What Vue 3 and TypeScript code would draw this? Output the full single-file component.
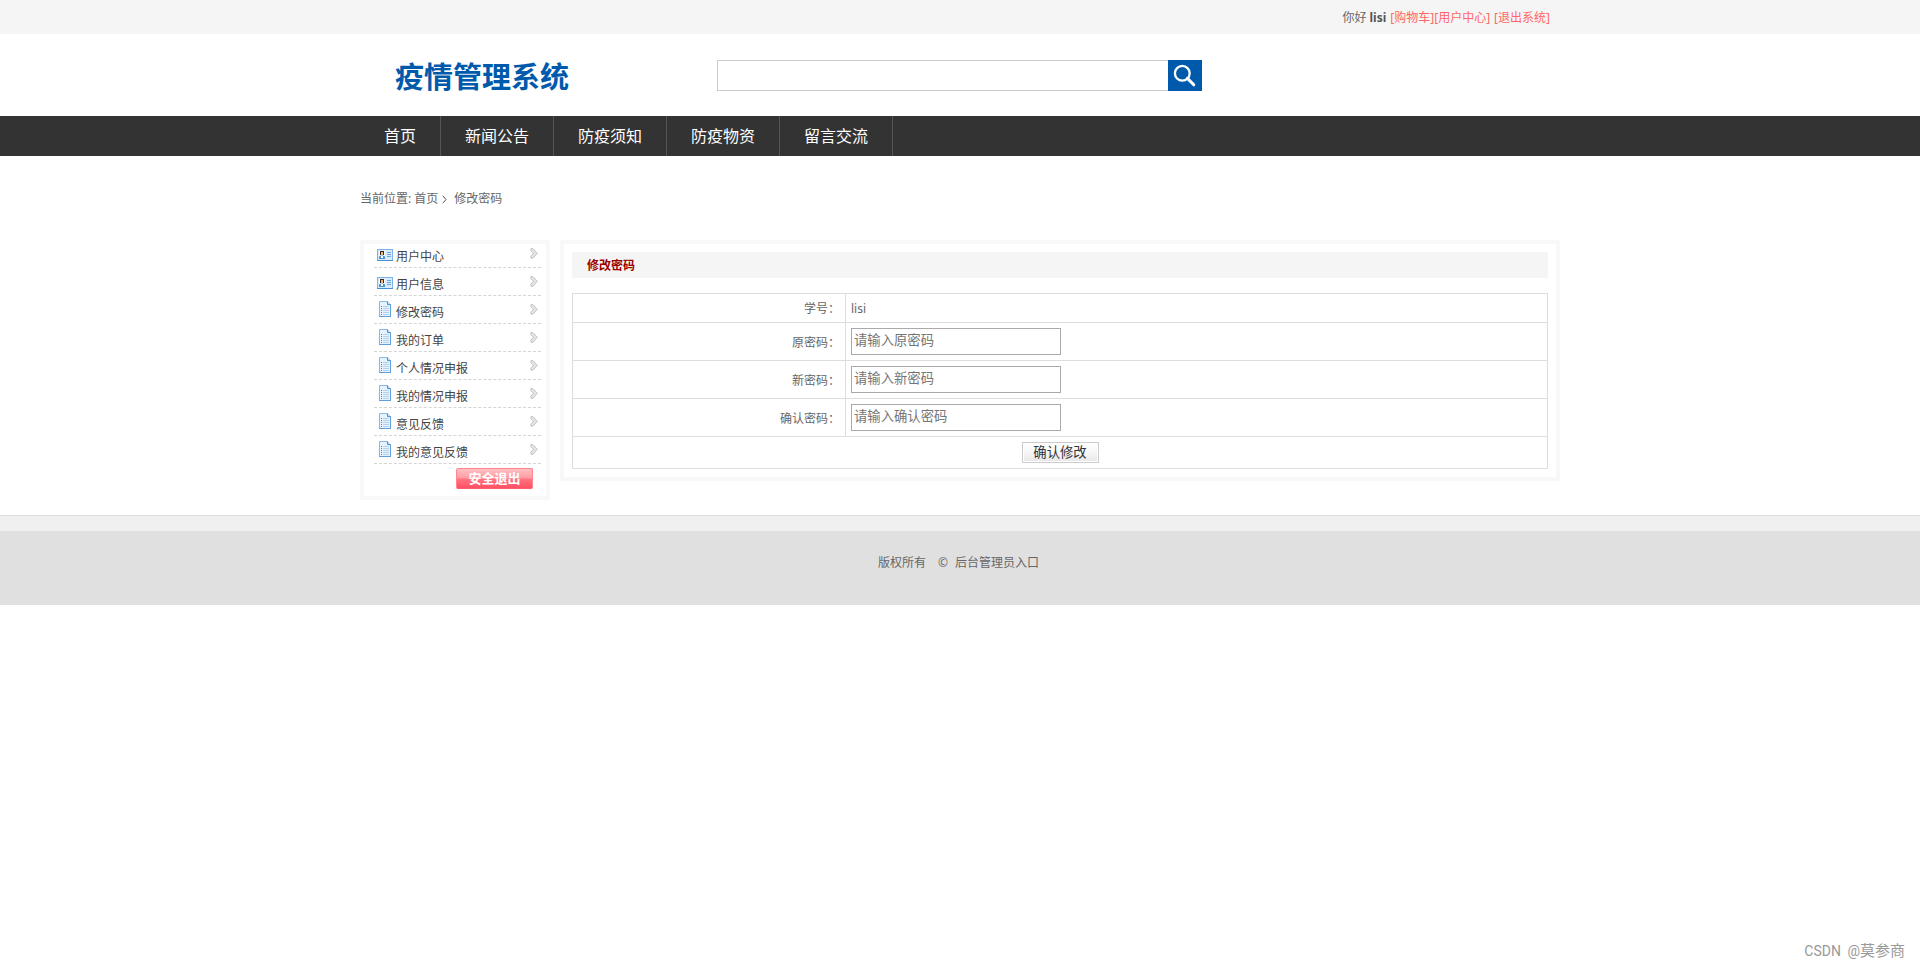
<script setup lang="ts">
import { ref } from 'vue'

interface MenuItem {
  label: string
  icon: 'card' | 'doc'
}

interface Field {
  label: string
  placeholder: string
}

const navItems: string[] = ['首页', '新闻公告', '防疫须知', '防疫物资', '留言交流']

const menu: MenuItem[] = [
  { label: '用户中心', icon: 'card' },
  { label: '用户信息', icon: 'card' },
  { label: '修改密码', icon: 'doc' },
  { label: '我的订单', icon: 'doc' },
  { label: '个人情况申报', icon: 'doc' },
  { label: '我的情况申报', icon: 'doc' },
  { label: '意见反馈', icon: 'doc' },
  { label: '我的意见反馈', icon: 'doc' },
]

const fields: Field[] = [
  { label: '原密码：', placeholder: '请输入原密码' },
  { label: '新密码：', placeholder: '请输入新密码' },
  { label: '确认密码：', placeholder: '请输入确认密码' },
]

const keyword = ref('')
const values = ref<string[]>(['', '', ''])
</script>

<template>
  <div class="page">
    <div class="topbar">
      <div class="wrap topbar-in">
        <span class="hello">你好</span>
        <b class="user">lisi</b>
        <a class="cart">[购物车]</a>
        <a class="center">[用户中心]</a>
        <a>[退出系统]</a>
      </div>
    </div>

    <header class="wrap header">
      <h1 class="logo">疫情管理系统</h1>
      <form class="search" @submit.prevent>
        <input v-model="keyword" type="text" class="search-input" />
        <button class="search-btn" type="submit" aria-label="搜索">
          <svg width="34" height="31" viewBox="0 0 34 31" fill="none" stroke="#fff">
            <ellipse cx="14.3" cy="13.3" rx="7.4" ry="7.4" stroke-width="2.3" />
            <path d="M19.4 18.4L25.8 24.8" stroke-width="3" stroke-linecap="round" />
          </svg>
        </button>
      </form>
    </header>

    <nav class="nav">
      <div class="wrap nav-in">
        <a v-for="item in navItems" :key="item" class="nav-item">{{ item }}</a>
      </div>
    </nav>

    <div class="wrap crumbs">
      <span>当前位置:</span>
      <a class="crumb-home">首页</a>
      <svg class="crumb-sep" width="5" height="9" viewBox="0 0 5 9" fill="none" stroke="#555">
        <path d="M0.8 0.8L4 4.5L0.8 8.2" />
      </svg>
      <span>修改密码</span>
    </div>

    <main class="wrap main">
      <aside class="side">
        <ul class="menu">
          <li v-for="item in menu" :key="item.label" class="menu-item">
            <svg v-if="item.icon === 'card'" class="icon card-icon" width="16" height="12" viewBox="0 0 16 12">
              <rect x="0.5" y="0.5" width="15" height="11" fill="#d9ebfc" stroke="#7db3e8" />
              <rect x="2" y="2" width="6" height="8" fill="#f4f9ff" />
              <rect x="3" y="2" width="4" height="4" fill="#3b2a20" />
              <rect x="4" y="3" width="2" height="3" fill="#f2b66f" />
              <path d="M2 10V7.5L4 6.5H6L8 7.5V10Z" fill="#4a94d6" />
              <rect x="4" y="7" width="2" height="2" fill="#fff" />
              <path d="M10 3.5H14M10 5.5H14M10 7.5H14" stroke="#6fa6dc" />
              <path d="M0 11.5H16" stroke="#4a8fd0" />
            </svg>
            <svg v-else class="icon doc-icon" width="12" height="16" viewBox="0 0 12 16">
              <path d="M0.5 0.5H8.5L11.5 3.5V15.5H0.5Z" fill="#e6f2fe" stroke="#86b8e8" />
              <path d="M8.5 0.5V3.5H11.5" fill="#cfe5fa" stroke="#4d8fce" />
              <path d="M0 15.5H12M11.5 4V16" stroke="#5f9fdb" />
              <path d="M4 5.5H10M4 7.5H10M4 9.5H10M4 11.5H10M4 13.5H10" stroke="#b3d0ec" />
              <path d="M2 5.5H3M2 7.5H3M2 9.5H3M2 11.5H3M2 13.5H3" stroke="#3ba55b" />
            </svg>
            <span class="menu-label">{{ item.label }}</span>
            <svg class="arrow" width="8" height="11" viewBox="0 0 8 11">
              <path d="M1 0.6L2.8 0.6L7.3 5.3L3 10.2L1 10.2L0.8 8.2L3.6 5.3L0.8 2.5Z" fill="#e6e6e6" stroke="#adadad" stroke-width="0.7" />
            </svg>
          </li>
        </ul>
        <button class="logout">安全退出</button>
      </aside>

      <section class="panel">
        <h2 class="panel-title">修改密码</h2>
        <form class="table" @submit.prevent>
          <div class="row row-id">
            <div class="label">学号：</div>
            <div class="value">lisi</div>
          </div>
          <div v-for="(field, i) in fields" :key="field.label" class="row">
            <div class="label">{{ field.label }}</div>
            <div class="value">
              <input v-model="values[i]" class="field" type="text" :placeholder="field.placeholder" />
            </div>
          </div>
          <div class="row row-submit">
            <button class="submit" type="submit">确认修改</button>
          </div>
        </form>
      </section>
    </main>

    <footer class="footer">
      <span class="rights">版权所有</span>
      <span class="copy">©</span>
      <a>后台管理员入口</a>
    </footer>

    <div class="watermark">CSDN @<span class="author">莫参商</span></div>
  </div>
</template>

<style>
body {
  margin: 0;
  background: #fff;
}
</style>

<style scoped>
.page {
  position: relative;
  height: 969px;
  overflow: hidden;
  box-sizing: border-box;
  color: #666;
  font: 12px/18px "Noto Sans", "Noto Sans CJK SC", sans-serif;
}

.wrap {
  width: 1200px;
  margin: 0 auto;
}

.topbar {
  height: 34px;
  background: #f5f5f5;
}

.topbar-in {
  display: flex;
  justify-content: flex-end;
  box-sizing: border-box;
  padding-right: 10px;
  line-height: 35px;
  white-space: nowrap;
}

.topbar a {
  color: #f66;
}

.hello {
  margin-right: 3px;
}

.user {
  margin-right: 4px;
  color: #555;
}

.center {
  margin-right: 4px;
}

.header {
  display: flex;
  height: 82px;
}

.logo {
  width: 322px;
  margin: 0 0 0 35px;
  color: #005aab;
  font-size: 29px;
  font-weight: 700;
  line-height: 85px;
}

.search {
  display: flex;
  width: 485px;
  height: 31px;
  margin-top: 26px;
}

.search-input {
  flex: 1;
  min-width: 0;
  box-sizing: border-box;
  padding: 0 6px;
  border: 1px solid #ccc;
  border-right: 0;
  border-radius: 0;
  outline: none;
}

.search-btn {
  width: 34px;
  height: 31px;
  padding: 0;
  border: 0;
  background: #005aab;
}

.search-btn svg {
  display: block;
}

.nav {
  height: 40px;
  background: #333;
}

.nav-in {
  display: flex;
}

.nav-item {
  padding: 0 24px;
  border-right: 1px solid #555;
  color: #fff;
  font-size: 16px;
  line-height: 40px;
}

.crumbs {
  display: flex;
  align-items: center;
  box-sizing: border-box;
  height: 84px;
  padding-top: 2px;
}

.crumb-home {
  margin-left: 3px;
}

.crumb-sep {
  margin: 0 7px 0 4px;
}

.main {
  display: flex;
  align-items: flex-start;
  justify-content: space-between;
  height: 275px;
}

.side {
  display: flex;
  flex-direction: column;
  box-sizing: border-box;
  width: 190px;
  height: 260px;
  padding: 0 5px 0 10px;
  border: 4px solid #f8f8f8;
}

.menu {
  margin: -4px 0 0;
  padding: 0;
  list-style: none;
}

.menu-item {
  display: flex;
  align-items: flex-start;
  box-sizing: border-box;
  width: 167px;
  height: 28px;
  padding: 0 3px;
  border-bottom: 1px dashed #d5d5d5;
  color: #444;
}

.icon {
  flex: none;
}

.card-icon {
  margin: 9px 3px 0 0;
}

.doc-icon {
  margin: 5px 5px 0 2px;
}

.menu-label {
  flex: 1;
  padding-top: 8px;
  line-height: 18px;
}

.arrow {
  margin-top: 8px;
}

.logout {
  align-self: flex-end;
  width: 77px;
  height: 21px;
  margin: 4px 8px 0 0;
  padding: 0;
  border: 1px solid #ff8590;
  border-bottom-color: #ff5d6d;
  border-radius: 2px;
  background: linear-gradient(#ffc0c3, #ff9ba2 48%, #ff7480 52%, #ff5064);
  color: #fff;
  font: bold 13px/17px "Noto Sans", "Noto Sans CJK SC", sans-serif;
}

.panel {
  box-sizing: border-box;
  width: 1000px;
  height: 241px;
  padding: 8px;
  border: 4px solid #f8f8f8;
}

.panel-title {
  height: 26px;
  margin: 0 0 15px;
  padding-left: 15px;
  background: #f5f5f5;
  color: #900;
  font-size: 12px;
  line-height: 27px;
}

.table {
  border: 1px solid #ddd;
}

.row {
  display: flex;
  height: 37px;
  border-bottom: 1px solid #ddd;
}

.row-id {
  height: 28px;
}

.label {
  display: flex;
  align-items: center;
  justify-content: flex-end;
  box-sizing: border-box;
  width: 273px;
  padding: 2px 5px 0 0;
  border-right: 1px solid #ddd;
}

.value {
  display: flex;
  align-items: center;
  padding-left: 5px;
}

.row-id .value {
  padding-top: 1px;
}

.field {
  box-sizing: border-box;
  width: 210px;
  height: 27px;
  padding: 0 2px 3px;
  border: 1px solid #aaa;
  border-radius: 0;
  outline: none;
  background: #fff;
  color: #333;
  font: 13.333px/20px "Noto Sans", "Noto Sans CJK SC", sans-serif;
}

.field::placeholder {
  color: #757575;
}

.row-submit {
  align-items: center;
  justify-content: center;
  height: 31px;
  border-bottom: 0;
}

.submit {
  width: 77px;
  height: 21px;
  padding: 0;
  border: 1px solid #ccc;
  border-radius: 0;
  background: linear-gradient(#fff, #f6f6f6 50%, #e6e6e6);
  box-shadow: inset 0 0 0 1px #fff;
  color: #333;
  font: 13.333px/19px "Noto Sans", "Noto Sans CJK SC", sans-serif;
}

.footer {
  display: flex;
  justify-content: center;
  box-sizing: border-box;
  height: 90px;
  padding: 22px 3px 0 0;
  border-top: 1px solid #ddd;
  background: linear-gradient(#f0f0f0 15px, #e0e0e0 15px);
  line-height: 50px;
}

.rights {
  margin-right: 12px;
}

.copy {
  margin-right: 7px;
}

.watermark {
  position: absolute;
  right: 15px;
  bottom: 7px;
  color: #999;
  font: 14px/22px Roboto, "Noto Sans CJK SC", sans-serif;
  word-spacing: 3px;
}

.author {
  font-size: 15px;
}
</style>
